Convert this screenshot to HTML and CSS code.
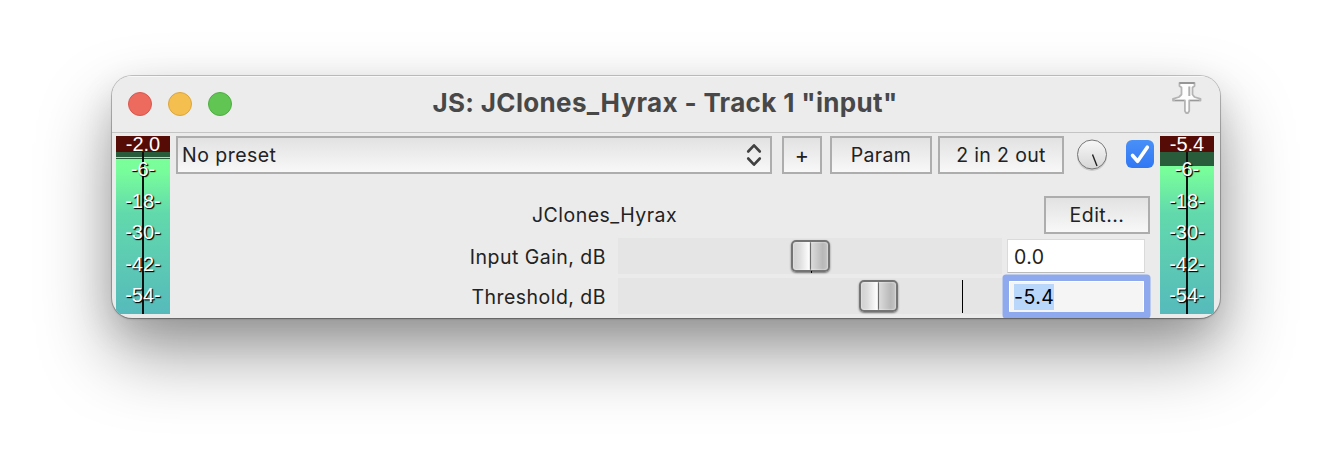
FILE: index.html
```html
<!DOCTYPE html>
<html lang="en">
<head>
<meta charset="utf-8">
<title>JS: JClones_Hyrax - Track 1 "input"</title>
<link rel="stylesheet" href="styles.css">
</head>
<body>
<div class="window">
  <header class="titlebar">
    <div class="lights"><i class="light red"></i><i class="light yellow"></i><i class="light green"></i></div>
    <h1 class="title"><span class="t-title">JS: JClones_Hyrax - Track 1 "input"</span></h1>
    <svg class="pin" width="36" height="36" viewBox="0 0 36 36">
      <path d="M10.500 4h15v3l-2 1.500v7l2 2.500 6 1.800v1.700H20.200v10.500l-1.200 2h-1.900l-1.200-2V21.500H4v-1.700l6-1.800 2.500-2.500v-7l-2-1.500z" fill="#fdfdfd" stroke="#b4b4b4" stroke-width="1.800" stroke-linejoin="round"/>
      <path d="M10.500 4h15" stroke="#969696" stroke-width="1.800"/>
      <path d="M20.300 7.500v9.500" stroke="#b0b0b0" stroke-width="2"/>
      <path d="M6 21.500h9M21 21.500h9" stroke="#999" stroke-width="1.200"/>
    </svg>
  </header>
  <div class="content">
    <div class="meter">
      <div class="peak">-2.0</div>
      <div class="scale"><i class="idle low"></i><i class="hold"></i><i class="axis"></i>
        <div class="marks"><span>-6-</span><span>-18-</span><span>-30-</span><span>-42-</span><span>-54-</span></div></div>
    </div>
    <main class="main">
      <div class="toolbar">
        <div class="box select"><span class="t-preset">No preset</span>
          <svg width="16" height="24" viewBox="0 0 16 24"><path d="M2.200 8.500 8 2.300l5.800 6.200M2.200 15.500 8 21.700l5.800-6.200" fill="none" stroke="#404040" stroke-width="2.600" stroke-linecap="round" stroke-linejoin="round"/></svg></div>
        <div class="box plus"><span>+</span></div>
        <div class="box param"><span class="t-param">Param</span></div>
        <div class="box io"><span class="t-io">2 in 2 out</span></div>
        <svg class="knob" width="34" height="36" viewBox="0 0 34 36">
          <defs><linearGradient id="kg" x1="0" y1="0" x2="0" y2="1"><stop offset="0" stop-color="#f8f8f8"/><stop offset="1" stop-color="#d6d6d6"/></linearGradient></defs>
          <circle cx="17" cy="19" r="15" fill="#ccc"/>
          <circle cx="17" cy="17.500" r="14.500" fill="url(#kg)" stroke="#777" stroke-width="1"/>
          <path d="M17.500 17.500 22 29" stroke="#222" stroke-width="1.400"/>
        </svg>
        <svg class="check" width="28" height="28" viewBox="0 0 28 28">
          <defs><linearGradient id="cg" x1="0" y1="0" x2="0" y2="1"><stop offset="0" stop-color="#4a90f8"/><stop offset="1" stop-color="#3077f5"/></linearGradient></defs>
          <rect width="28" height="28" rx="6" fill="url(#cg)"/>
          <path d="M6.600 15.500 11.600 21.200 21.300 7.200" fill="none" stroke="#fff" stroke-width="3.700" stroke-linecap="round" stroke-linejoin="round"/>
        </svg>
      </div>
      <div class="namerow"><span class="name t-name">JClones_Hyrax</span><div class="box edit"><span class="t-edit">Edit...</span></div></div>
      <div class="row">
        <label class="label"><span class="t-gain">Input Gain, dB</span></label>
        <div class="track"><i class="tick center"></i><i class="thumb mid"></i></div>
        <div class="field"><span class="t-zero">0.0</span></div>
      </div>
      <div class="row">
        <label class="label"><span class="t-thr">Threshold, dB</span></label>
        <div class="track"><i class="tick right"></i><i class="thumb high"></i></div>
        <div class="field focused"><span class="selected">-5.4</span></div>
      </div>
    </main>
    <div class="meter">
      <div class="peak">-5.4</div>
      <div class="scale"><i class="idle high-idle"></i><i class="axis"></i>
        <div class="marks"><span>-6-</span><span>-18-</span><span>-30-</span><span>-42-</span><span>-54-</span></div></div>
    </div>
  </div>
</div>
</body>
</html>
```
FILE: styles.css
```css
* { box-sizing: border-box; }
body { margin: 0; padding: 76px 112px 0; height: 466px; background: #fff; overflow: hidden;
  font: 19.500px/24px Inter, "Liberation Sans", sans-serif; letter-spacing: .47px; color: #222; }
span { white-space: nowrap; }
.window { width: 1108px; height: 242px; border-radius: 20px; background: #ebebeb; overflow: hidden;
  box-shadow: 0 0 0 1px rgba(0,0,0,.2), 0 1px 2px rgba(0,0,0,.25), 0 36px 72px rgba(0,0,0,.38), 0 14px 36px rgba(0,0,0,.12); }
.titlebar { height: 57px; display: flex; align-items: center; justify-content: space-between; background: #ececec;
  border-bottom: 1px solid #c4c4c4; box-shadow: inset 0 1px #f8f8f8; padding: 0 15px 0 16px; }
.lights { display: flex; gap: 16px; width: 200px; }
.light { width: 24px; height: 24px; border-radius: 50%; border: 1px solid; }
.red { background: #ed6a5e; border-color: #d9574d; }
.yellow { background: #f5bf4f; border-color: #dba53c; }
.green { background: #61c554; border-color: #4fad41; }
.title { margin: -2px 0 0; flex: 1; text-align: center; font-size: 26px; line-height: 32px; font-weight: 700; color: #484848; letter-spacing: .34px; padding-right: 3px; }
.pin { margin: -14px 0 0 164px; }
.content { height: 185px; display: flex; padding: 3px 6px 4px 4px; }
.meter { width: 54px; height: 178px; display: flex; flex-direction: column; font: 20px/16px "Liberation Sans", Arial, sans-serif; letter-spacing: 0; color: #fff; text-align: center; }
.peak { height: 16px; background: #550b06; line-height: 17px; }
.scale { position: relative; height: 162px; background: linear-gradient(#7cff9a 0, #78fd9b 12%, #62d9ac 38%, #56babb 100%); }
.idle, .axis, .hold { position: absolute; left: 0; top: 0; }
.idle { width: 100%; background: #285c3b; }
.low { height: 5px; }
.high-idle { height: 14px; }
.hold { top: 6px; height: 1px; width: 100%; background: #285c3b; }
.axis { left: 26px; width: 2px; height: 100%; background: #111; }
.marks { position: relative; display: flex; flex-direction: column; gap: 15.500px; padding-top: 9.400px; text-shadow: 1px 1px 1px #000, 1px 1px 1px rgba(0,0,0,.6); }
.main { flex: 1; padding: 0 10px 0 6px; display: flex; flex-direction: column; }
.toolbar { height: 38px; display: flex; }
.box { height: 38px; border: 2px solid #adadad; background: linear-gradient(#e2e2e2, #f8f8f8); display: flex; align-items: center; justify-content: center; }
.select { width: 596px; justify-content: space-between; padding: 0 8px 0 4px; }
.plus { width: 40px; margin-left: 10px; font-size: 21.500px; }
.param { width: 102px; margin-left: 8px; letter-spacing: .3px; }
.io { width: 126px; margin-left: 6px; letter-spacing: .35px; }
.knob { margin: 1px 0 0 11px; }
.check { margin: 4px 0 0 17px; }
.toolbar .check { margin-right: -4px; flex: none; }
.toolbar .knob { flex: none; }
.namerow { height: 38px; margin-top: 22px; display: flex; align-items: center; justify-content: space-between; padding-left: 356px; }
.edit { width: 106px; }
.row { height: 36px; margin-top: 4px; display: flex; align-items: center; }
.label { width: 442px; padding: 2px 12px 0 0; text-align: right; }
.track { position: relative; width: 384px; height: 36px; background: #e5e5e5; }
.thumb { position: absolute; top: 2px; width: 39px; height: 32px; border: 2px solid #747474; border-radius: 5px;
  background: linear-gradient(90deg, #d0d0d0 0, #dcdcdc 18%, #fff 47%, #6c6c6c 48%, #6c6c6c 51%, #dadada 53%, #b8b8b8 85%, #c5c5c5 100%); box-shadow: 0 1px 2px rgba(0,0,0,.5), inset 0 0 2px #fff; }
.mid { left: 173px; }
.high { left: 241px; }
.tick { position: absolute; width: 1px; background: #000; top: 2px; height: 33px; }
.center { left: 193px; height: 34px; z-index: 1; top: 33px; height: 2px; }
.right { left: 344px; }
.field { width: 138px; height: 34px; margin-left: 5px; padding: 2px 0 0 6px; background: #fff; border: 1px solid #dadada; border-bottom-color: #bbb; display: flex; align-items: center; }
.focused { height: 31px; width: 135px; margin-left: 7px; background: #f5f5f5; border: 1px solid #fff; border-bottom: 0; padding: 1px 0 0 4px; box-shadow: 0 0 0 6.500px #8ea9ed; border-radius: 1px; color: #000; }
.selected { height: 26px; line-height: 26px; background: #b9d6fb; }
```
